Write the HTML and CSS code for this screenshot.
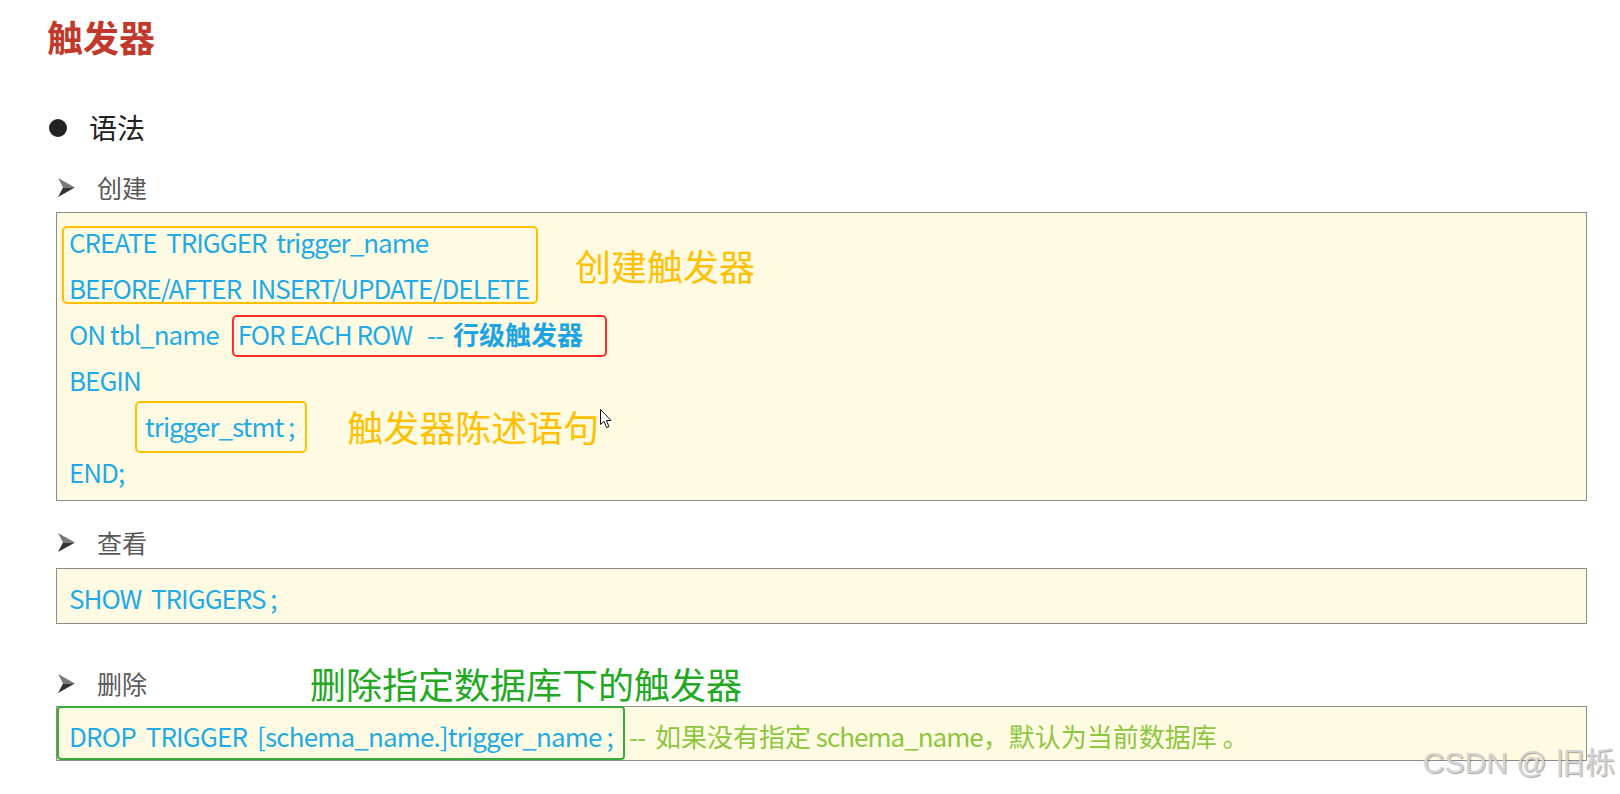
FILE: index.html
```html
<!DOCTYPE html>
<html lang="zh-CN">
<head>
<meta charset="utf-8">
<title>触发器</title>
<link rel="stylesheet" href="styles.css">
</head>
<body>
<div class="page">
  <h1 class="title">触发器</h1>

  <div class="bul"><span class="dot"></span><span class="bul-t">语法</span></div>

  <div class="sub">
    <svg class="arr" width="17" height="19" viewBox="0 0 17 19"><polygon points="0,0 17,9.5 5,9.5" fill="#7a7a7a"/><polygon points="5,9.5 17,9.5 0,19" fill="#333"/></svg>
    <span class="sub-t">创建</span>
  </div>
  <div class="code code-main">
    <div class="grp">
      <div class="hl hl-orange">
        <div class="ln t">CREATE  TRIGGER  trigger_name</div>
        <div class="ln t">BEFORE/AFTER  INSERT/UPDATE/DELETE</div>
      </div>
      <span class="note note-1">创建触发器</span>
    </div>
    <div class="ln row">
      <span class="t">ON tbl_name</span>
      <span class="hl hl-red"><span class="t">FOR EACH ROW</span><span class="t dash">--</span><span class="cn-b">行级触发器</span></span>
    </div>
    <div class="ln t">BEGIN</div>
    <div class="ln row indent">
      <span class="hl hl-stmt"><span class="t">trigger_stmt ;</span></span>
      <span class="note note-2">触发器陈述语句</span>
      <svg class="cursor" width="13" height="20" viewBox="0 0 13 20"><path d="M0.5 0.5 L0.5 15.5 L4 12.3 L6.6 18.6 L8.9 17.6 L6.4 11.5 L11 11.5 Z" fill="#fff" stroke="#111" stroke-width="1" stroke-linejoin="round"/></svg>
    </div>
    <div class="ln t">END;</div>
  </div>

  <div class="sub sub-gap">
    <svg class="arr" width="17" height="19" viewBox="0 0 17 19"><polygon points="0,0 17,9.5 5,9.5" fill="#7a7a7a"/><polygon points="5,9.5 17,9.5 0,19" fill="#333"/></svg>
    <span class="sub-t">查看</span>
  </div>
  <div class="code code-s">
    <div class="ln t">SHOW  TRIGGERS ;</div>
  </div>

  <div class="sub sub-del">
    <svg class="arr" width="17" height="19" viewBox="0 0 17 19"><polygon points="0,0 17,9.5 5,9.5" fill="#7a7a7a"/><polygon points="5,9.5 17,9.5 0,19" fill="#333"/></svg>
    <span class="sub-t">删除</span>
    <span class="green-note">删除指定数据库下的触发器</span>
  </div>
  <div class="code code-s code-del">
    <div class="ln row">
      <span class="hl hl-green"><span class="t drop">DROP  TRIGGER  [schema_name.]trigger_name ;</span></span>
      <span class="cmt"><span class="t">--</span><span class="cn cn-first">如果没有指定</span><span class="t"> schema_name</span><span class="cn">，默认为当前数据库 。</span></span>
    </div>
  </div>
</div>
<div class="wm">CSDN @ 旧栎</div>
</body>
</html>
```
FILE: styles.css
```css
html, body {
  margin: 0;
  padding: 0;
  background: #ffffff;
}
body {
  font-family: "Noto Sans CJK SC", "Noto Sans", sans-serif;
  width: 1620px;
  height: 794px;
  overflow: hidden;
  position: relative;
}
.page {
  padding: 0 33px 0 48px;
}

/* title */
.title {
  margin: 16px 0 0 -1px;
  font-size: 36px;
  line-height: 40px;
  font-weight: 700;
  color: #c0392b;
}

/* bullet heading */
.bul {
  display: flex;
  align-items: center;
  height: 36px;
  margin-top: 53px;
}
.dot {
  width: 18px;
  height: 18px;
  border-radius: 50%;
  background: #222;
  margin: 2px 0 0 1px;
}
.bul-t {
  margin-left: 22px;
  font-size: 28px;
  line-height: 36px;
  color: #222;
}

/* sub headings */
.sub {
  display: flex;
  align-items: center;
  height: 30px;
  margin-top: 27px;
  padding-left: 10px;
}
.sub-gap { margin-top: 26px; }
.sub-del {
  height: 36px;
  margin-top: 41px;
}
.arr { flex: none; }
.sub-t {
  margin-left: 22px;
  font-size: 25px;
  line-height: 30px;
  color: #595959;
}
.green-note {
  margin-left: 163px;
  font-size: 36px;
  line-height: 36px;
  color: #22a822;
}

/* code boxes */
.code {
  margin: 10px 0 0 8px;
  border: 1px solid #8c8c8c;
  background: #fffbe3;
  padding: 6px 12px 5px;
  font-size: 26px;
  letter-spacing: -1px;
  color: #22aae6;
}
.code-s {
  margin-top: 11px;
  padding: 6px 12px 2px;
}
.code-del {
  margin-top: 5px;
  padding: 6px 12px 1px;
  height: 46px;
}
.ln {
  height: 46px;
  line-height: 46px;
}
.t { white-space: pre; line-height: 46px; }
.row {
  display: flex;
  align-items: center;
}
.grp {
  display: flex;
  align-items: center;
}

/* highlight frames */
.hl { position: relative; }
.hl::before {
  content: "";
  position: absolute;
  border: 2px solid #ffc000;
  border-radius: 5px;
  pointer-events: none;
}
.hl-orange::before {
  top: 7px;
  bottom: 7px;
  left: -7px;
  right: -9px;
}
.hl-red {
  display: flex;
  align-items: center;
  height: 46px;
  margin-left: 19px;
}
.hl-red::before {
  top: 4px;
  bottom: 0;
  left: -6px;
  right: -24px;
  border-color: #ff2b2b;
}
.dash { margin-left: 15px; }
.cn-b {
  margin-left: 10px;
  font-weight: 700;
  letter-spacing: 0;
  color: #1ea3e3;
  line-height: 46px;
}
.indent { padding-left: 76px; }
.hl-stmt { height: 46px; }
.hl-stmt::before {
  top: -2px;
  bottom: -4px;
  left: -10px;
  right: -13px;
}
.note {
  font-size: 36px;
  line-height: 46px;
  letter-spacing: 0;
  color: #ffc000;
}
.note-1 { margin-left: 46px; }
.note-2 { margin-left: 53px; }
.cursor {
  align-self: flex-start;
  margin: 6px 0 0 1px;
  flex: none;
}
.hl-green { height: 46px; }
.hl-green::before {
  top: -7px;
  bottom: -1px;
  left: -12px;
  right: -12px;
  border-color: #37ad37;
  border-radius: 4px;
}
.drop { letter-spacing: -0.85px; }
.cmt {
  margin-left: 16px;
  line-height: 46px;
  white-space: pre;
  color: #8dc63f;
}
.cn { letter-spacing: 0; }
.cn-first { margin-left: 10px; }

/* watermark */
.wm {
  position: absolute;
  right: 5px;
  top: 748px;
  font-family: "Liberation Sans", "Noto Sans CJK SC", sans-serif;
  font-size: 30px;
  line-height: 30px;
  color: #d4d4d4;
  text-shadow: 1px 1px 1px rgba(0, 0, 0, 0.35);
  white-space: nowrap;
}
```
